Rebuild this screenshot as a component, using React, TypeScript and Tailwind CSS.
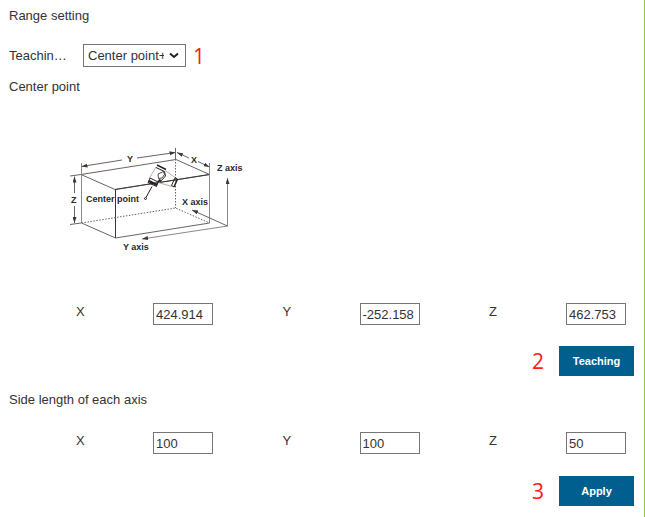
import type { ReactNode } from "react";

function Diagram() {
  return (
    <svg
      viewBox="65 145 185 115"
      width="185"
      height="115"
      role="img"
      aria-label="Center point and axes of the range box"
      fill="none"
      stroke="#6b6361"
      strokeWidth="1"
    >
      <defs>
        <marker id="arrow" viewBox="0 0 6 4" refX="6" refY="2" markerWidth="6" markerHeight="4" orient="auto-start-reverse">
          <path d="M0 0L6 2L0 4Z" fill="#3d3735" stroke="none" />
        </marker>
      </defs>
      {/* box edges */}
      <path d="M81 174.500L115 189.500L209.500 174.500L176 159.500Z" />
      <path d="M115 189.500L209.500 174.500" stroke="#3d3735" />
      <path d="M81.500 163V223M209.500 163V223" stroke="#8f8987" />
      <path d="M115.500 189V238" stroke="#3d3735" />
      <path d="M81.500 223L115.500 238L209.500 223" />
      <path d="M175.500 148V159" />
      <path d="M175.500 159V208M81.500 223L175.500 208L209.500 223" strokeDasharray="1.5 1.5" />
      {/* dimensions */}
      <path d="M122 160L81.500 166.500" markerEnd="url(#arrow)" />
      <path d="M137 158L175.500 152.500" markerEnd="url(#arrow)" />
      <path d="M189 158L177 152.500" markerEnd="url(#arrow)" />
      <path d="M198 161.500L209.500 167" markerEnd="url(#arrow)" />
      <path d="M74.500 193V176.500" markerEnd="url(#arrow)" />
      <path d="M74.500 206V223" markerEnd="url(#arrow)" />
      <path d="M70 176L81 174.500M70 224.500L81 223" />
      {/* axes */}
      <g stroke="#8f8987">
        <path d="M227.500 226V178" markerEnd="url(#arrow)" />
        <path d="M227.500 226L142 239" markerEnd="url(#arrow)" />
      </g>
      <path d="M227.500 226L192 210" markerEnd="url(#arrow)" />
      {/* robot hand */}
      <path d="M156 167L149.500 178M165 170.500L175 177.500M158 182.500L172 186.500" stroke="#b5b0ae" />
      <g stroke="#252120">
        <path d="M157 165L166 169.500" strokeWidth="1.500" />
        <path d="M156 167.500L164.500 171.500" />
        <path d="M164.500 171.500L165.500 176L160 182" />
        <path d="M158 174L163.500 171.500L164.500 174.500L162 178L158.500 178.500Z" strokeWidth="0.800" />
        <path d="M150 178L158 182L156.500 186.500L148 182.500Z" />
        <path d="M149 181L157 185" strokeWidth="2.500" />
        <path d="M158 182L160.500 179.500" strokeWidth="2" />
        <path d="M175 178L171.500 185.500" />
        <path d="M177.500 179L174 187" strokeWidth="1.500" />
        <path d="M175 178L177.500 179M171.500 185.500L174 187" />
        <path d="M152 186.500L146 197.500" />
        <circle cx="145.500" cy="198.500" r="1" fill="#fff" />
      </g>
      <g fill="#2b2726" stroke="none" className="font-['Liberation_Sans',Arial,sans-serif] text-[9px] font-bold">
        <text x="127" y="162">Y</text>
        <text x="191" y="163">X</text>
        <text x="71" y="203">Z</text>
        <text x="217" y="171">Z axis</text>
        <text x="182" y="205">X axis</text>
        <text x="123" y="250">Y axis</text>
        <text x="86" y="202">Center point</text>
      </g>
    </svg>
  );
}

function Field({ id, label, value }: { id: string; label: string; value: string }) {
  return (
    <div className="flex w-[137px] items-start justify-between">
      <label htmlFor={id} className="leading-[18px]">
        {label}
      </label>
      <input
        id={id}
        type="text"
        defaultValue={value}
        className="h-[22px] w-[60px] border border-[#767676] bg-white px-0.5"
      />
    </div>
  );
}

function AxisRow({ prefix, values }: { prefix: string; values: string[] }) {
  return (
    <div className="flex justify-between pr-[18px] pl-[76px]">
      {["X", "Y", "Z"].map((axis, i) => (
        <Field key={axis} id={`${prefix}-${axis}`} label={axis} value={values[i]} />
      ))}
    </div>
  );
}

function Step({ children }: { children: ReactNode }) {
  return (
    <span className="font-['Open_Sans','Noto_Sans',sans-serif] text-[21px] leading-6 text-[#ff1a10]">{children}</span>
  );
}

function Action({ step, children }: { step: string; children: ReactNode }) {
  return (
    <div className="flex items-center justify-end gap-[15px] pr-[10px]">
      <Step>{step}</Step>
      <button type="button" className="h-[30px] w-[75px] bg-[#005f8f] text-[11px] font-bold text-white">
        {children}
      </button>
    </div>
  );
}

export default function App() {
  return (
    <main className="min-h-screen border-r border-[#8cc63f] bg-white pt-2 pb-[11px] font-['Liberation_Sans',Arial,sans-serif] text-[13px] leading-4 text-[#333]">
      <h1 className="px-[9px]">Range setting</h1>
      <div className="mt-5 flex h-[23px] items-center pl-[9px]">
        <label htmlFor="method" className="w-[60px] truncate">
          Teaching method
        </label>
        <div className="relative ml-[14px]">
          <select
            id="method"
            className="block h-[23px] w-[103px] appearance-none border border-[#767676] bg-white pr-[21px] pl-1 text-[13px]"
          >
            <option>Center point+Side length</option>
          </select>
          <svg
            className="pointer-events-none absolute top-2 right-[7px]"
            width="10"
            height="7"
            viewBox="0 0 10 7"
            fill="none"
            stroke="#222"
            strokeWidth="2"
            aria-hidden="true"
          >
            <path d="M1 1.500L5 5L9 1.500" />
          </svg>
        </div>
        <div className="ml-[7px] flex">
          <Step>1</Step>
        </div>
      </div>
      <h2 className="mt-3 px-[9px]">Center point</h2>
      <div className="mt-[50px] mb-[43px] pl-[65px]">
        <Diagram />
      </div>
      <AxisRow prefix="center" values={["424.914", "-252.158", "462.753"]} />
      <div className="mt-[21px]">
        <Action step="2">Teaching</Action>
      </div>
      <h2 className="mt-4 mb-6 px-[9px]">Side length of each axis</h2>
      <AxisRow prefix="side" values={["100", "100", "50"]} />
      <div className="mt-[22px]">
        <Action step="3">Apply</Action>
      </div>
    </main>
  );
}
